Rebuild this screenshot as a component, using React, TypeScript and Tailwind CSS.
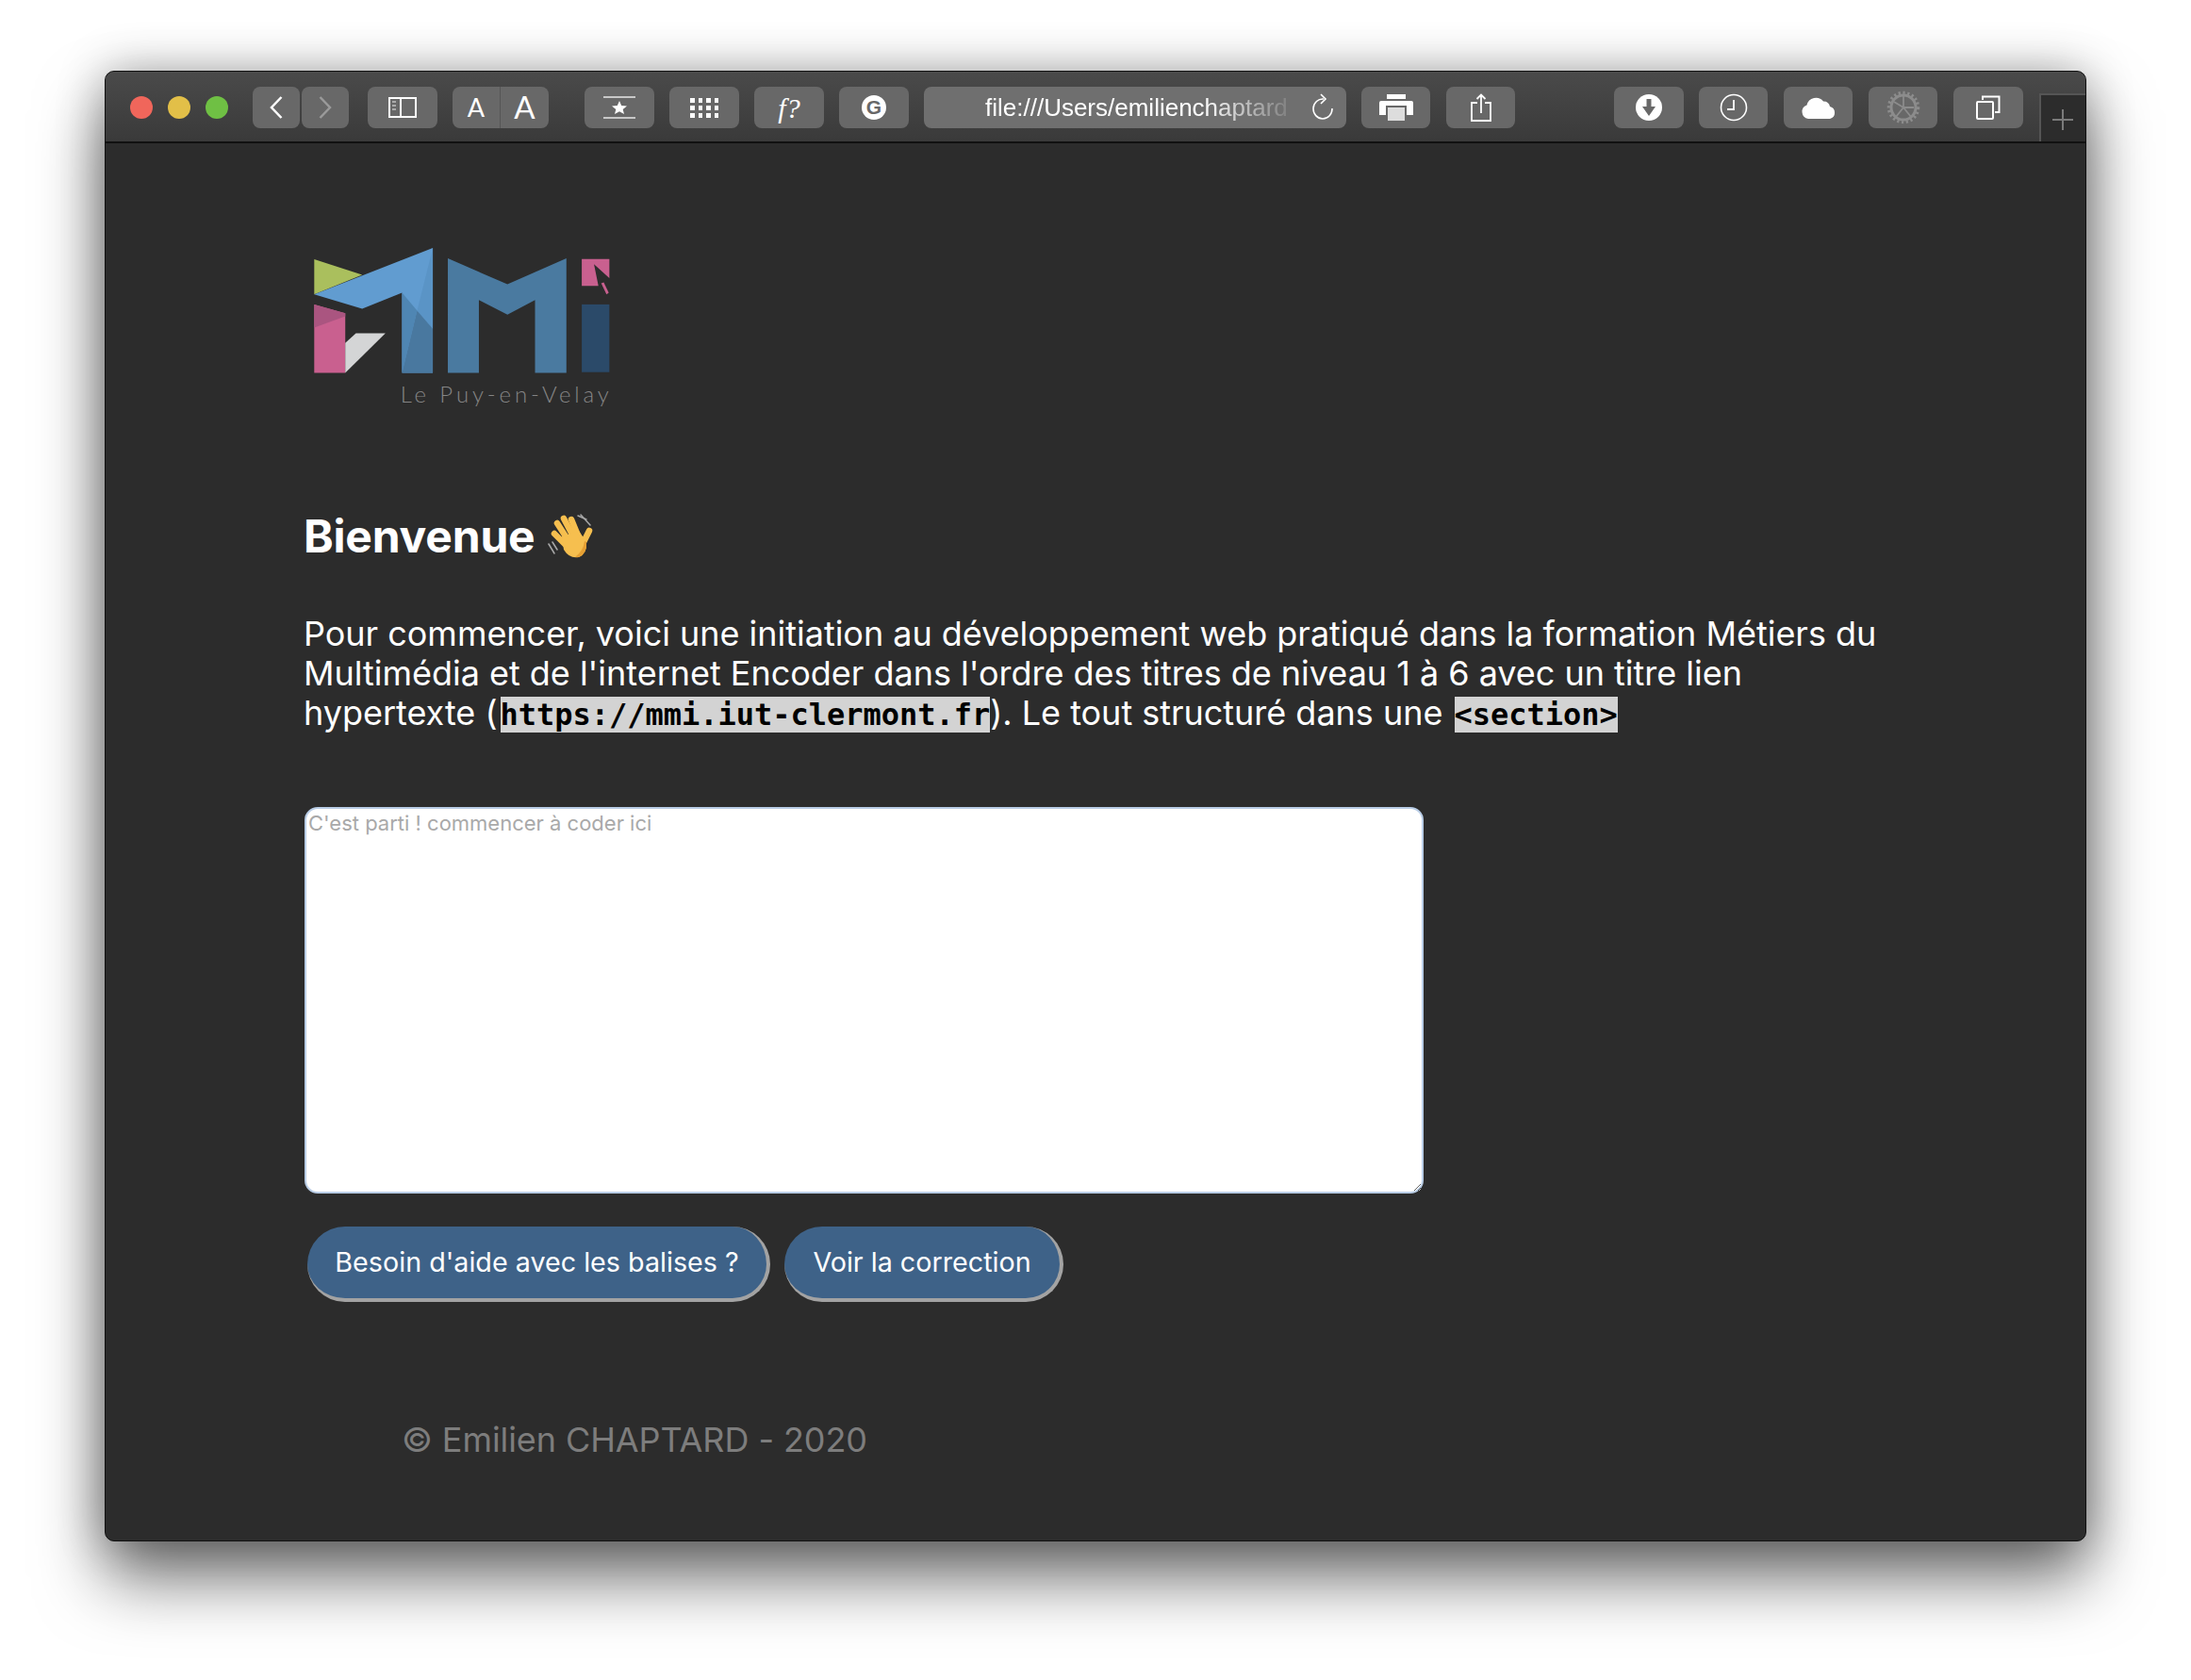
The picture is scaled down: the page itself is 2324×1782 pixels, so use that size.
const ToolBtn = ({ className = "", children }: { className?: string; children?: React.ReactNode }) => (
  <div className={`flex h-[44px] shrink-0 items-center justify-center rounded-[8px] bg-[#686868] ${className}`}>{children}</div>
);

const Logo = () => (
  <svg viewBox="36 60 990 520" className="block h-[173px] w-[330px]">
    <polygon points="69,108 222,158 69,220" fill="#aabf5d" />
    <polygon points="69,220 447,72 447,470 349,470 349,215 222,266" fill="#619cd0" />
    <polygon points="447,72 397,272 447,330" fill="#5a94c6" />
    <polygon points="349,215 397,272 349,470" fill="#4f86b3" />
    <polygon points="397,272 447,330 447,470 349,470" fill="#49789f" />
    <polygon points="69,252 168,280 168,470 69,470" fill="#c9608f" />
    <polygon points="69,252 168,280 168,290 69,326" fill="#aa5580" />
    <polygon points="168,375 202,344 296,344 168,470" fill="#d4d5d6" />
    <polygon points="495,105 685,188 873,105 873,470 773,470 773,238 685,285 594,238 594,470 495,470" fill="#4a7aa0" />
    <polygon points="922,107 1010,107 1010,168 961,124 975,193 922,193" fill="#c9608f" />
    <polygon points="984,185 992,182 1008,215 1001,220" fill="#c9608f" />
    <rect x="922" y="252" width="88" height="216" fill="#2b4a69" />
    <text x="344" y="565" fontSize="72" fontFamily="Lato, 'Liberation Sans', sans-serif" fontWeight="300" fill="#858585" textLength="664">
      Le Puy-en-Velay
    </text>
  </svg>
);

const WaveHand = () => (
  <svg viewBox="0 0 50 48" className="h-[48px] w-[50px] shrink-0">
    <g stroke="#a8a8a8" strokeWidth="1.5" fill="none" strokeLinecap="round">
      <path d="M2 32 L8 42" />
      <path d="M6 30 L11 38" />
      <path d="M33 2 L42 6" />
      <path d="M36 1 L46 12" />
    </g>
    <g stroke="#f6bf4f" strokeWidth="6.5" strokeLinecap="round" fill="none">
      <path d="M11 10 L22 27" />
      <path d="M18 5 L28 24" />
      <path d="M26 6 L33 23" />
      <path d="M8 21 L20 33" />
      <path d="M45 18 L39 30" />
    </g>
    <path d="M16 24 L34 18 L42 30 Q43 42 34 46 Q24 48 18 38 Z" fill="#f6bf4f" />
    <path d="M34 46 Q43 42 42 30 L40 29 Q39 39 30 46 Z" fill="#e59f33" />
  </svg>
);

export default function App() {
  return (
    <div className="h-[1782px] w-[2324px] overflow-hidden bg-white pl-[111px] pt-[75px] font-['Inter','Liberation_Sans',sans-serif]">
      <div className="flex h-[1560px] w-[2102px] flex-col overflow-hidden rounded-[10px] border border-[#111] bg-[#2c2c2c] shadow-[0_40px_70px_rgba(0,0,0,0.55),0_0_50px_rgba(0,0,0,0.3)]">
        <div className="flex h-[76px] shrink-0 items-center border-b-2 border-b-[#111] bg-gradient-to-b from-[#4a4a4a] to-[#3a3a3a] pl-[26px] pt-[2px]">
          <div className="flex gap-[16px]">
            <span className="h-[24px] w-[24px] rounded-full bg-[#f0665b]" />
            <span className="h-[24px] w-[24px] rounded-full bg-[#e2bf48]" />
            <span className="h-[24px] w-[24px] rounded-full bg-[#6fc044]" />
          </div>

          <ToolBtn className="ml-[26px] w-[50px]">
            <svg width="14" height="24" viewBox="0 0 14 24" fill="none" stroke="#fff" strokeWidth="2.5"><path d="M12.5 1 L2 12 L12.5 23" /></svg>
          </ToolBtn>
          <ToolBtn className="ml-[2px] w-[50px]">
            <svg width="14" height="24" viewBox="0 0 14 24" fill="none" stroke="#9a9a9a" strokeWidth="2.5"><path d="M1.5 1 L12 12 L1.5 23" /></svg>
          </ToolBtn>
          <ToolBtn className="ml-[20px] w-[74px]">
            <svg width="30" height="22" viewBox="0 0 30 22" fill="none">
              <rect x="1" y="1" width="28" height="20" stroke="#fff" strokeWidth="2" />
              <path d="M13 1 V21" stroke="#fff" strokeWidth="2" />
              <path d="M4 5 H8 M4 9 H8 M4 13 H8" stroke="#aaa" strokeWidth="2" />
            </svg>
          </ToolBtn>
          <div className="ml-[16px] flex h-[44px] w-[102px] shrink-0 divide-x divide-[#555] rounded-[8px] bg-[#686868] text-white">
            <span className="flex w-[51px] items-center justify-center font-['Lato'] text-[27px]">A</span>
            <span className="flex w-[51px] items-center justify-center font-['Lato'] text-[33px]">A</span>
          </div>
          <ToolBtn className="ml-[38px] w-[74px]">
            <svg width="36" height="24" viewBox="0 0 36 24">
              <path d="M1 1 H35 M1 23 H35" stroke="#c8c8c8" strokeWidth="2" />
              <polygon points="18,5 20.2,10 26,10.5 21.7,14 23,19 18,16.3 13,19 14.3,14 10,10.5 15.8,10" fill="#fff" />
            </svg>
          </ToolBtn>
          <ToolBtn className="ml-[16px] w-[74px]">
            <div className="grid grid-cols-4 gap-x-[4px] gap-y-[3px]">
              {Array.from({ length: 12 }).map((_, i) => (
                <span key={i} className="h-[5px] w-[4.5px] bg-white" />
              ))}
            </div>
          </ToolBtn>
          <ToolBtn className="ml-[16px] w-[74px]">
            <span className="font-['Liberation_Serif'] text-[30px] italic text-white">f?</span>
          </ToolBtn>
          <ToolBtn className="ml-[16px] w-[74px]">
            <span className="flex h-[26px] w-[26px] items-center justify-center rounded-full bg-white font-['Liberation_Sans'] text-[21px] font-bold text-[#686868]">G</span>
          </ToolBtn>

          <div className="ml-[16px] flex h-[44px] w-[448px] shrink-0 items-center rounded-[8px] bg-[#6f6f6f] pl-[65px] text-white">
            <span className="w-[319px] whitespace-nowrap pt-[1px] font-['Liberation_Sans'] text-[26px] [mask-image:linear-gradient(to_right,#000_72%,rgba(0,0,0,0.15)_100%)]">
              file:///Users/emilienchaptard
            </span>
            <svg className="ml-[26px]" width="26" height="30" viewBox="0 0 26 30" fill="none" stroke="#fff" strokeWidth="1.6">
              <path d="M14 6 A10 10.5 0 1 0 23 16" />
              <path d="M11 1 L16 6 L11 11" />
            </svg>
          </div>
          <ToolBtn className="ml-[16px] w-[73px]">
            <svg width="36" height="28" viewBox="0 0 36 28">
              <rect x="8" y="0" width="20" height="5" fill="#fff" />
              <path d="M2 7 H34 Q36 7 36 9 V22 H29 V12 H7 V22 H0 V9 Q0 7 2 7 Z" fill="#fff" />
              <rect x="9" y="14" width="18" height="14" fill="#ddd" />
            </svg>
          </ToolBtn>
          <ToolBtn className="ml-[17px] w-[73px]">
            <svg width="24" height="30" viewBox="0 0 24 30" fill="none" stroke="#fff" strokeWidth="1.8">
              <path d="M8 10 H2 V29 H22 V10 H16" />
              <path d="M12 21 V2 M7.5 6 L12 1.5 L16.5 6" />
            </svg>
          </ToolBtn>

          <ToolBtn className="ml-[105px] w-[74px]">
            <svg width="28" height="28" viewBox="0 0 28 28">
              <circle cx="14" cy="14" r="14" fill="#fff" />
              <path d="M11.5 5 H16.5 V13 H21 L14 23 L7 13 H11.5 Z" fill="#686868" />
            </svg>
          </ToolBtn>
          <ToolBtn className="ml-[16px] w-[73px]">
            <svg width="30" height="30" viewBox="0 0 30 30" fill="none" stroke="#fff">
              <circle cx="15" cy="15" r="13.5" strokeWidth="1.6" />
              <path d="M15 7 V17 H8" strokeWidth="1.8" />
            </svg>
          </ToolBtn>
          <ToolBtn className="ml-[17px] w-[73px]">
            <svg width="38" height="24" viewBox="0 0 38 24">
              <path d="M8 24 A7.5 7.5 0 0 1 6.5 9.5 A10 10 0 0 1 24 5.5 A7 7 0 0 1 31 11 A6.7 6.7 0 0 1 31 24 Z" fill="#fff" />
            </svg>
          </ToolBtn>
          <ToolBtn className="ml-[17px] w-[73px]">
            <svg width="36" height="36" viewBox="0 0 36 36" fill="none" stroke="#8c8c8c">
              <circle cx="18" cy="18" r="13" strokeWidth="3" />
              <circle cx="18" cy="18" r="15.5" strokeWidth="3.5" strokeDasharray="2.2 2.6" />
              <path d="M18 18 V6 M18 18 L29 18 M18 18 L10 28 M18 18 L8 12 M18 18 L26 28" strokeWidth="1.8" />
            </svg>
          </ToolBtn>
          <ToolBtn className="ml-[17px] w-[74px]">
            <svg width="26" height="26" viewBox="0 0 26 26" fill="none" stroke="#fff" strokeWidth="2">
              <path d="M7 5 V1.5 H24.5 V18 H20" />
              <rect x="1" y="7" width="17" height="18" rx="1" />
            </svg>
          </ToolBtn>
          <div className="ml-[17px] flex h-[51px] w-[50px] shrink-0 items-center justify-center self-end border-l-2 border-t-2 border-[#555] bg-[#2c2c2c] pr-[2px] pt-[2px]">
            <svg width="22" height="22" viewBox="0 0 22 22" stroke="#7a7a7a" strokeWidth="2">
              <path d="M11 0 V22 M0 11 H22" />
            </svg>
          </div>
        </div>

        <div className="flex flex-col items-start pl-[210px] pt-[107px]">
          <Logo />

          <h1 className="mt-[108px] flex items-center gap-[12px] text-[48px] font-bold leading-[58px] tracking-[-0.2px] text-white">
            Bienvenue <WaveHand />
          </h1>

          <p className="mt-[53px] w-[1690px] text-[36px] leading-[42px] tracking-[-0.02px] text-white">
            Pour commencer, voici une initiation au développement web pratiqué dans la formation Métiers du Multimédia et de l'internet Encoder dans l'ordre des titres de niveau 1 à 6 avec un titre lien hypertexte (
            <code className="ml-[3px] bg-[#d3d3d3] font-['DejaVu_Sans_Mono'] text-[32px] font-bold text-black">https://mmi.iut-clermont.fr</code>
            ). Le tout structuré dans une{" "}
            <code className="ml-[2px] bg-[#d3d3d3] font-['DejaVu_Sans_Mono'] text-[32px] font-bold text-black">&lt;section&gt;</code>
          </p>

          <textarea
            placeholder="C'est parti ! commencer à coder ici"
            className="mt-[77px] ml-[1px] block h-[410px] w-[1187px] rounded-[14px] border-2 border-[#b9cde6] bg-white pl-[2px] pt-[1px] text-[22px] leading-[28px] outline-none placeholder:text-[#a9a9a9]"
          />

          <div className="ml-[4px] mt-[35px] flex gap-[15px]">
            <button className="flex h-[80px] w-[491px] items-center justify-center rounded-[40px] border-b-4 border-r-4 border-[#a3a3a3] bg-[#3e6288] text-[28.7px] text-white">
              Besoin d'aide avec les balises ?
            </button>
            <button className="flex h-[80px] w-[296px] items-center justify-center rounded-[40px] border-b-4 border-r-4 border-[#a3a3a3] bg-[#3e6288] text-[28.7px] text-white">
              Voir la correction
            </button>
          </div>

          <p className="ml-[104px] mt-[123px] text-[36px] leading-[46px] tracking-[-0.08px] text-[#7d7d7d]">© Emilien CHAPTARD - 2020</p>
        </div>
      </div>
    </div>
  );
}
